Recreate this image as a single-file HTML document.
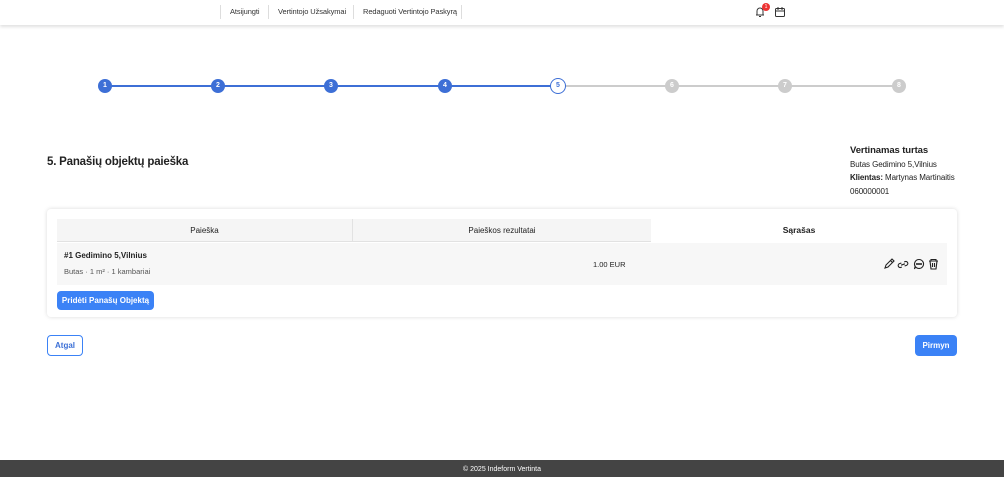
<!DOCTYPE html><html><head><style>
*{box-sizing:border-box;margin:0;padding:0}
body{width:1004px;height:477px;position:relative;background:#fff;font-family:"Liberation Sans",sans-serif;color:#222;overflow:hidden}
.nav{position:absolute;top:0;left:0;right:0;height:25px;background:#fff;box-shadow:0 2px 3px rgba(0,0,0,.12)}
.nav a{position:absolute;top:7px;font-size:7.5px;color:#333;letter-spacing:-.1px}
.sep{position:absolute;top:5px;width:1px;height:14px;background:#ddd}
.line{position:absolute;top:85px;height:2px}
.c{position:absolute;top:79px;width:14px;height:14px;border-radius:50%;color:#fff;font-size:7px;font-weight:bold;text-align:center;line-height:14px}
.abs{position:absolute}
.btn{position:absolute;border-radius:4px;font-size:8px;font-weight:bold;text-align:center}
</style></head><body>
<div class="nav">
<div class="sep" style="left:220px"></div><a style="left:230px">Atsijungti</a>
<div class="sep" style="left:268px"></div><a style="left:278px">Vertintojo Užsakymai</a>
<div class="sep" style="left:353px"></div><a style="left:363px">Redaguoti Vertintojo Paskyrą</a>
<div class="sep" style="left:461px"></div>
<svg class="abs" style="left:754px;top:6px" width="12" height="12" viewBox="0 0 12 12" fill="none" stroke="#333" stroke-width="1"><path d="M3 9V5a3 3 0 0 1 6 0v4H2h8M5 10.5h2"/></svg>
<div class="abs" style="left:762px;top:3px;width:8px;height:8px;border-radius:50%;background:#e33;color:#fff;font-size:5px;text-align:center;line-height:8px">1</div>
<svg class="abs" style="left:774px;top:6px" width="12" height="12" viewBox="0 0 12 12" fill="none" stroke="#333" stroke-width="1"><rect x="1.5" y="2.5" width="9" height="8" rx="1"/><path d="M1.5 5h9M4 1v3M8 1v3"/></svg>
</div>
<div class="line" style="left:105px;width:453px;background:#3d6fd6"></div>
<div class="line" style="left:558px;width:341px;background:#ccc"></div>
<div class="c" style="left:98px;background:#3d6fd6">1</div>
<div class="c" style="left:211px;background:#3d6fd6">2</div>
<div class="c" style="left:324px;background:#3d6fd6">3</div>
<div class="c" style="left:438px;background:#3d6fd6">4</div>
<div class="c" style="left:550px;width:16px;height:16px;top:78px;line-height:14px;background:#fff;border:1.5px solid #3d6fd6;color:#3d6fd6">5</div>
<div class="c" style="left:665px;background:#ccc">6</div>
<div class="c" style="left:778px;background:#ccc">7</div>
<div class="c" style="left:892px;background:#ccc">8</div>
<div class="abs" style="left:47px;top:156px;font-size:11.5px;font-weight:bold;letter-spacing:-.2px">5. Panašių objektų paieška</div>
<div class="abs" style="left:850px;top:144px;font-size:8px;line-height:13.5px;letter-spacing:-.1px">
<div style="font-weight:bold;font-size:9.5px">Vertinamas turtas</div>
<div>Butas Gedimino 5,Vilnius</div>
<div><b>Klientas:</b> Martynas Martinaitis</div>
<div>060000001</div></div>
<div class="abs" style="left:47px;top:209px;width:910px;height:108px;border-radius:4px;box-shadow:0 0 4px rgba(0,0,0,.15)"></div>
<div class="abs" style="left:57px;top:219px;width:296px;height:23px;background:#f5f5f5;border-bottom:1px solid #e2e2e2;border-right:1px solid #e2e2e2;font-size:8px;text-align:center;line-height:23px">Paieška</div>
<div class="abs" style="left:353px;top:219px;width:298px;height:23px;background:#f5f5f5;border-bottom:1px solid #e2e2e2;font-size:8px;text-align:center;line-height:23px">Paieškos rezultatai</div>
<div class="abs" style="left:651px;top:219px;width:296px;height:23px;background:#fff;font-size:8.5px;font-weight:bold;text-align:center;line-height:23px">Sąrašas</div>
<div class="abs" style="left:57px;top:243px;width:890px;height:42px;background:#f7f7f7"></div>
<div class="abs" style="left:64px;top:251px;font-size:8px;font-weight:bold">#1 Gedimino 5,Vilnius</div>
<div class="abs" style="left:64px;top:267px;font-size:7.5px;color:#555">Butas · 1 m² · 1 kambariai</div>
<div class="abs" style="left:593px;top:260px;font-size:7.5px">1.00 EUR</div>
<svg class="abs" style="left:883px;top:258px" width="58" height="12" viewBox="0 0 58 12" fill="none" stroke="#222" stroke-width="1.1"><path d="M2 10l1-3 6-6 2 2-6 6zM7.5 2.5l2 2"/><path d="M19 4.5h-2a2 2 0 0 0 0 4h1M21 8.5h2a2 2 0 0 0 0-4h-1M18 6.5h4" transform="rotate(-20 20 6.5)"/><path d="M36 1.5a4.5 4.5 0 1 1-3.5 7.3L31.5 11l.6-2.8A4.5 4.5 0 0 1 36 1.5z"/><circle cx="34" cy="6" r=".5" fill="#222"/><circle cx="36" cy="6" r=".5" fill="#222"/><circle cx="38" cy="6" r=".5" fill="#222"/><path d="M46 3h9M48 3V1.5h5V3M47 3l1 8h5l1-8M49.5 5v4M51.5 5v4"/></svg>
<div class="btn" style="left:57px;top:291px;width:97px;height:19px;background:#3b82f6;color:#fff;line-height:19px">Pridėti Panašų Objektą</div>
<div class="btn" style="left:47px;top:335px;width:36px;height:21px;border:1px solid #3b82f6;color:#3b6fd6;line-height:19px">Atgal</div>
<div class="btn" style="left:915px;top:335px;width:42px;height:21px;background:#3b82f6;color:#fff;line-height:21px">Pirmyn</div>
<div class="abs" style="left:0;top:460px;width:1004px;height:17px;background:#444;color:#fff;font-size:7px;text-align:center;line-height:19px">© 2025 Indeform Vertinta</div>
</body></html>
